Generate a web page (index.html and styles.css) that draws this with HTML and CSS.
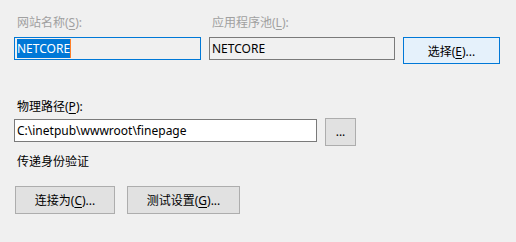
FILE: index.html
```html
<!DOCTYPE html>
<html lang="zh-CN">
<head>
    <meta charset="UTF-8">
    <title>编辑网站</title>
    <link rel="stylesheet" href="styles.css">
</head>
<body>
    <div class="dialog">
        <div class="site-row">
            <div class="field site-name">
                <label class="field-label disabled">网站名称(<u>S</u>):</label>
                <div class="textbox focused"><span class="selected">NETCORE</span><span class="caret"></span></div>
            </div>
            <div class="field app-pool">
                <label class="field-label disabled">应用程序池(<u>L</u>):</label>
                <div class="textbox readonly">NETCORE</div>
            </div>
            <button class="btn btn-select">选择(<u>E</u>)...</button>
        </div>

        <div class="path-block">
            <label class="field-label path-label">物理路径(<u>P</u>):</label>
            <div class="path-row">
                <div class="textbox path-box">C:\inetpub\wwwroot\finepage</div>
                <button class="btn btn-browse">...</button>
            </div>
        </div>

        <div class="auth-label">传递身份验证</div>

        <div class="button-row">
            <button class="btn btn-connect">连接为(<u>C</u>)...</button>
            <button class="btn btn-test">测试设置(<u>G</u>)...</button>
        </div>
    </div>
</body>
</html>
```

FILE: styles.css
```css
body {
    margin: 0;
    background-color: #f0f0f0;
    font-family: "Noto Sans", "Noto Sans CJK SC", sans-serif;
    font-size: 12px;
    color: #000;
}
.dialog {
    width: 516px;
    height: 242px;
    padding: 15px 0 0 14px;
    box-sizing: border-box;
}
u {
    text-decoration-thickness: 1px;
    text-underline-offset: 2px;
}
.site-row {
    display: flex;
    align-items: flex-start;
}
.field {
    display: flex;
    flex-direction: column;
}
.field-label {
    display: block;
    line-height: 16px;
    height: 16px;
    padding-left: 3px;
    margin-bottom: 6px;
}
.disabled {
    color: #a0a0a0;
}
.site-name {
    width: 187px;
}
.app-pool {
    width: 186px;
    margin-left: 8px;
}
.textbox {
    height: 23px;
    box-sizing: border-box;
    border: 1px solid #7a7a7a;
    background-color: #ffffff;
    padding: 0 2px;
    line-height: 21px;
    white-space: nowrap;
    display: flex;
    align-items: center;
}
.focused {
    border-color: #0078d7;
    background-color: #f0f0f0;
}
.readonly {
    background-color: #f0f0f0;
}
.selected {
    background-color: #0078d7;
    color: #ffffff;
    line-height: 19px;
}
.caret {
    display: inline-block;
    width: 1px;
    height: 19px;
    background-color: #ff7f27;
}
.btn {
    font-family: inherit;
    font-size: 12px;
    color: #000;
    background-color: #e1e1e1;
    border: 1px solid #adadad;
    padding: 0;
    height: 28px;
    box-sizing: border-box;
}
.btn-select {
    margin: 22px 0 0 8px;
    width: 97px;
    height: 27px;
    background-color: #e5f1fb;
    border-color: #0078d7;
}
.path-block {
    margin-top: 35px;
}
.path-label {
    margin-bottom: 3px;
}
.path-row {
    display: flex;
    align-items: flex-start;
}
.path-box {
    width: 303px;
    margin-top: 1px;
}
.btn-browse {
    width: 31px;
    margin-left: 8px;
    line-height: 12px;
}
.auth-label {
    margin-top: 8px;
    padding-left: 3px;
    line-height: 16px;
}
.button-row {
    display: flex;
    gap: 12px;
    margin-top: 16px;
    padding-left: 1px;
}
.btn-connect {
    width: 100px;
}
.btn-test {
    width: 113px;
}
```
